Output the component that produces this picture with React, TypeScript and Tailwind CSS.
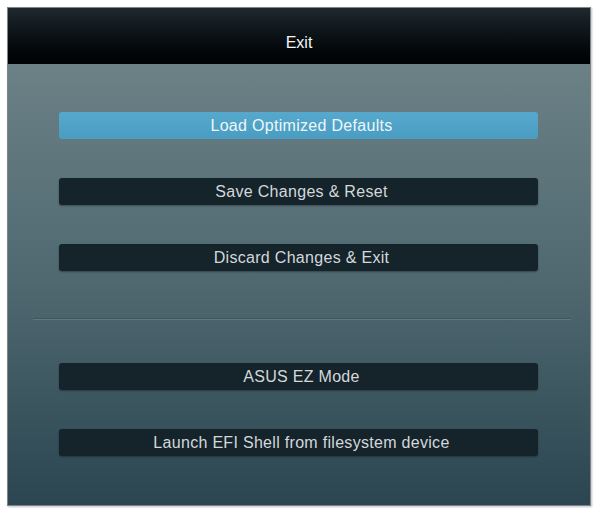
import React from 'react';

const items = [
  { label: 'Load Optimized Defaults', active: true },
  { label: 'Save Changes & Reset' },
  { label: 'Discard Changes & Exit' },
];

const extra = [{ label: 'ASUS EZ Mode' }, { label: 'Launch EFI Shell from filesystem device' }];

const MenuButton: React.FC<{ label: string; active?: boolean }> = ({ label, active }) => (
  <button
    type="button"
    className={
      active
        ? 'ml-[51px] w-[479px] h-[27px] rounded-[3px] bg-gradient-to-b from-[#56a9cc] to-[#4a9dc2] text-[#eef6f9] text-[16px] tracking-[0.3px] leading-none flex items-center justify-center pl-[6px]'
        : 'ml-[51px] w-[479px] h-[27px] rounded-[3px] bg-[#15232b] shadow-[0_1px_2px_rgba(0,0,0,0.35)] text-[#d3d8da] text-[16px] tracking-[0.3px] leading-none flex items-center justify-center pl-[6px]'
    }
  >
    {label}
  </button>
);

export default function App() {
  return (
    <div className="w-[598px] h-[512px] bg-white pt-[7px] pl-[7px] font-['Liberation_Sans',Arial,sans-serif]">
      <div className="w-[584px] h-[499px] flex flex-col border border-[#7d8588] shadow-[1px_1px_2px_rgba(0,0,0,0.25)]">
        {/* Header */}
        <div className="h-[56px] bg-gradient-to-b from-[#1e292e] via-[#0b1215] to-[#010203] flex justify-center pt-[27px]">
          <span className="text-[16px] text-[#f2f4f5] leading-none">Exit</span>
        </div>

        {/* Body */}
        <div className="flex-1 flex flex-col bg-gradient-to-b from-[#6b8186] via-[#4f6870] to-[#2b4651] pt-[48px]">
          <div className="flex flex-col gap-[39px]">
            {items.map((it) => (
              <MenuButton key={it.label} label={it.label} active={it.active} />
            ))}
          </div>

          <div className="ml-[25px] w-[538px] mt-[47px] border-t border-[#3d555d] border-b border-b-[#62787f]" />

          <div className="flex flex-col gap-[39px] mt-[43px]">
            {extra.map((it) => (
              <MenuButton key={it.label} label={it.label} />
            ))}
          </div>
        </div>
      </div>
    </div>
  );
}
